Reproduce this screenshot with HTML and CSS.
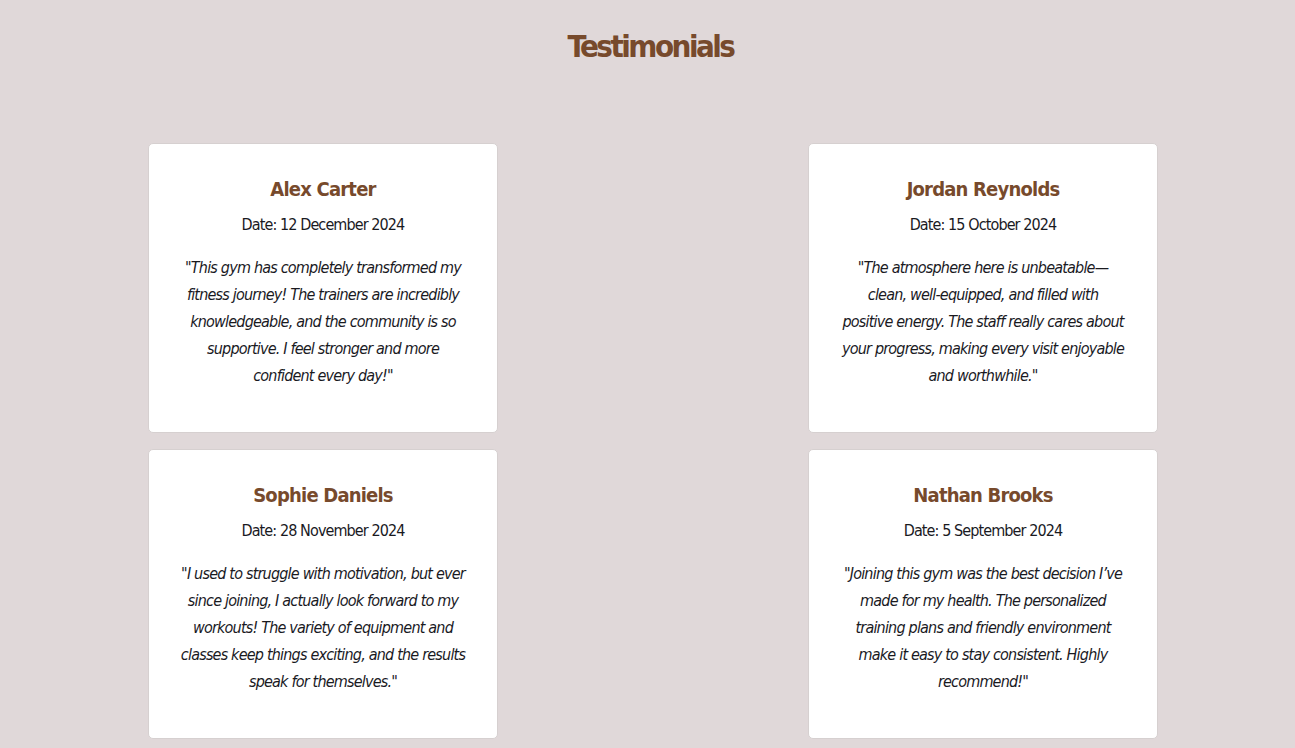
FILE: index.html
```html
<!DOCTYPE html>
<html lang="en">
<head>
<meta charset="utf-8">
<title>Testimonials</title>
<link rel="stylesheet" href="styles.css">
</head>
<body>
<section class="testimonials">
  <h1 class="section-title">Testimonials</h1>
  <div class="grid">
    <article class="card">
      <h2 class="name">Alex Carter</h2>
      <p class="date">Date: 12 December 2024</p>
      <p class="quote">"This gym has completely transformed my<br>fitness journey! The trainers are incredibly<br>knowledgeable, and the community is so<br>supportive. I feel stronger and more<br>confident every day!"</p>
    </article>
    <article class="card">
      <h2 class="name">Jordan Reynolds</h2>
      <p class="date">Date: 15 October 2024</p>
      <p class="quote">"The atmosphere here is unbeatable—<br>clean, well-equipped, and filled with<br>positive energy. The staff really cares about<br>your progress, making every visit enjoyable<br>and worthwhile."</p>
    </article>
    <article class="card">
      <h2 class="name">Sophie Daniels</h2>
      <p class="date">Date: 28 November 2024</p>
      <p class="quote">"I used to struggle with motivation, but ever<br>since joining, I actually look forward to my<br>workouts! The variety of equipment and<br>classes keep things exciting, and the results<br>speak for themselves."</p>
    </article>
    <article class="card">
      <h2 class="name">Nathan Brooks</h2>
      <p class="date">Date: 5 September 2024</p>
      <p class="quote">"Joining this gym was the best decision I’ve<br>made for my health. The personalized<br>training plans and friendly environment<br>make it easy to stay consistent. Highly<br>recommend!"</p>
    </article>
  </div>
</section>
</body>
</html>
```

FILE: styles.css
```css
* { box-sizing: border-box; }

body {
  margin: 0;
  background: #e0d8d9;
  font-family: "DejaVu Sans Condensed", "Liberation Sans", sans-serif;
  color: #1a1a1f;
}

.testimonials {
  padding-top: 21px;
}

.section-title {
  margin: 0 0 72px;
  padding-left: 6px;
  text-align: center;
  font-size: 31px;
  line-height: 50px;
  font-weight: 700;
  color: #774a2c;
  letter-spacing: -2.5px;
}

.grid {
  display: grid;
  grid-template-columns: 350px 350px;
  justify-content: space-between;
  row-gap: 16px;
  padding: 0 137px 0 148px;
}

.card {
  height: 290px;
  background: #ffffff;
  border: 1px solid #d6d0d0;
  border-radius: 5px;
  padding: 30px 8px 0;
  text-align: center;
}

.name {
  margin: 0;
  font-size: 20px;
  line-height: 30px;
  font-weight: 700;
  color: #774a2c;
  letter-spacing: -0.8px;
}

.date {
  margin: 9px 0 0;
  font-size: 16px;
  line-height: 24px;
  letter-spacing: -0.9px;
}

.quote {
  margin: 17px 0 0;
  font-size: 16px;
  line-height: 27px;
  font-style: italic;
  letter-spacing: -0.8px;
  white-space: nowrap;
}
```
